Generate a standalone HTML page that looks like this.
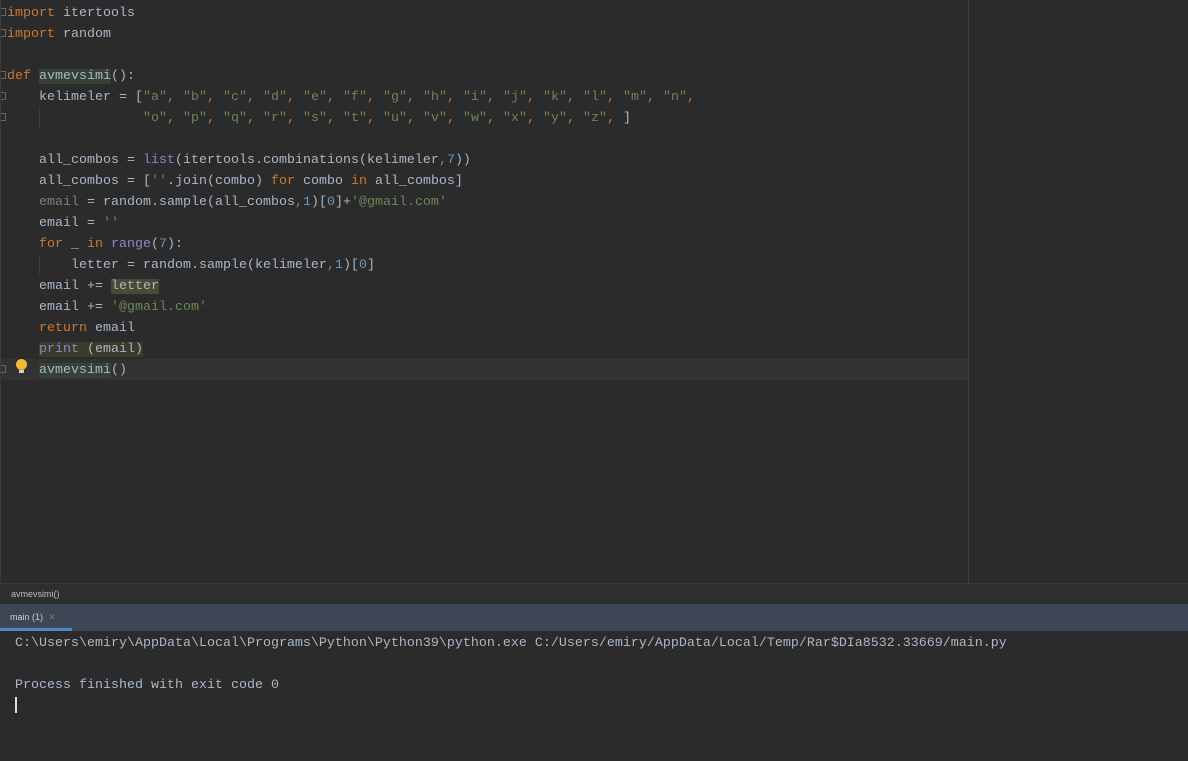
<!DOCTYPE html>
<html><head><meta charset="utf-8"><style>
body{margin:0;width:1188px;height:761px;background:#2b2b2b;overflow:hidden;position:relative;font-family:"Liberation Mono",monospace;}
.ed{position:absolute;left:0;top:0;width:1188px;height:583px;background:#2b2b2b;border-left:1px solid #3a3a3a;box-sizing:border-box}
.l{position:absolute;left:6px;height:21px;line-height:21px;font-size:13.33px;color:#a9b7c6;white-space:pre;margin-top:1px}
.k{color:#cc7832}.s{color:#6a8759}.n{color:#6897bb}.b{color:#8888c6}.g{color:#7a7e85}
.cur{position:absolute;left:0;top:359px;width:967px;height:21px;background:#323232}
.margin{position:absolute;left:967px;top:0;width:1px;height:583px;background:#3d3d3d}
.crumb{position:absolute;left:0;top:583px;width:1188px;height:21px;background:#2f2f2f;border-top:1px solid #383838;font-family:"Liberation Sans",sans-serif;font-size:9px;color:#bbb;line-height:21px;padding-left:11px;box-sizing:border-box}
.tabs{position:absolute;left:0;top:604px;width:1188px;height:27px;background:#3c4654}
.tab{position:absolute;left:0;top:0;width:72px;height:27px;border-bottom:3px solid #4a88c7;box-sizing:border-box;font-family:"Liberation Sans",sans-serif;font-size:9px;color:#ccc;line-height:27px;padding-left:10px}
.con{position:absolute;left:15px;font-size:13.33px;color:#a9b7c6;white-space:pre;line-height:21px;height:21px;margin-top:1px}
.hl{background:#4a4a35}
.hl2{background:#3b3b2b}
.dh{background:#344134}
.fold{position:absolute;left:0;width:5px;height:8px;border:1px solid #666;border-left:none;box-sizing:border-box}
</style></head><body>
<div class="ed">
<div class="cur"></div>
<div class="margin"></div>
<div style="position:absolute;left:38px;top:107px;width:1px;height:21px;background:#393939"></div>
<div style="position:absolute;left:38px;top:254px;width:1px;height:21px;background:#393939"></div>
<div class="fold" style="top:8px"></div><div class="fold" style="top:29px"></div><div class="fold" style="top:71px"></div><div class="fold" style="top:92px"></div><div class="fold" style="top:113px"></div><div class="fold" style="top:365px"></div>
<div style="position:absolute;left:15px;top:359px;width:11px;height:11px;border-radius:50%;background:#f2b935"></div>
<div style="position:absolute;left:18px;top:370px;width:5px;height:3px;background:#ccc"></div>
<div class="l" style="top:2px"><span class="k">import</span> itertools</div>
<div class="l" style="top:23px"><span class="k">import</span> random</div>
<div class="l" style="top:65px"><span class="k">def</span> <span class="dh">avmevsimi</span>():</div>
<div class="l" style="top:86px">    kelimeler = [<span class="s">"a"</span><span class="k">, </span><span class="s">"b"</span><span class="k">, </span><span class="s">"c"</span><span class="k">, </span><span class="s">"d"</span><span class="k">, </span><span class="s">"e"</span><span class="k">, </span><span class="s">"f"</span><span class="k">, </span><span class="s">"g"</span><span class="k">, </span><span class="s">"h"</span><span class="k">, </span><span class="s">"i"</span><span class="k">, </span><span class="s">"j"</span><span class="k">, </span><span class="s">"k"</span><span class="k">, </span><span class="s">"l"</span><span class="k">, </span><span class="s">"m"</span><span class="k">, </span><span class="s">"n"</span><span class="k">,</span></div>
<div class="l" style="top:107px">                 <span class="s">"o"</span><span class="k">, </span><span class="s">"p"</span><span class="k">, </span><span class="s">"q"</span><span class="k">, </span><span class="s">"r"</span><span class="k">, </span><span class="s">"s"</span><span class="k">, </span><span class="s">"t"</span><span class="k">, </span><span class="s">"u"</span><span class="k">, </span><span class="s">"v"</span><span class="k">, </span><span class="s">"w"</span><span class="k">, </span><span class="s">"x"</span><span class="k">, </span><span class="s">"y"</span><span class="k">, </span><span class="s">"z"</span><span class="k">, </span>]</div>
<div class="l" style="top:149px">    all_combos = <span class="b">list</span>(itertools.combinations(kelimeler<span class="k">,</span><span class="n">7</span>))</div>
<div class="l" style="top:170px">    all_combos = [<span class="s">''</span>.join(combo) <span class="k">for</span> combo <span class="k">in</span> all_combos]</div>
<div class="l" style="top:191px">    <span class="g">email</span> = random.sample(all_combos<span class="k">,</span><span class="n">1</span>)[<span class="n">0</span>]+<span class="s">'@gmail.com'</span></div>
<div class="l" style="top:212px">    email = <span class="s">''</span></div>
<div class="l" style="top:233px">    <span class="k">for</span> _ <span class="k">in</span> <span class="b">range</span>(<span class="n">7</span>):</div>
<div class="l" style="top:254px">        letter = random.sample(kelimeler<span class="k">,</span><span class="n">1</span>)[<span class="n">0</span>]</div>
<div class="l" style="top:275px">    email += <span class="hl">letter</span></div>
<div class="l" style="top:296px">    email += <span class="s">'@gmail.com'</span></div>
<div class="l" style="top:317px">    <span class="k">return</span> email</div>
<div class="l" style="top:338px">    <span class="hl2"><span class="b">print</span> (email)</span></div>
<div class="l" style="top:359px">    <span class="dh">avmevsimi</span>()</div>
</div>
<div class="crumb">avmevsimi()</div>
<div class="tabs"><div class="tab">main (1) <span style="color:#777;margin-left:3px">✕</span></div></div>
<div class="con" style="top:632px">C:\Users\emiry\AppData\Local\Programs\Python\Python39\python.exe C:/Users/emiry/AppData/Local/Temp/Rar$DIa8532.33669/main.py</div>
<div class="con" style="top:674px">Process finished with exit code 0</div>
<div style="position:absolute;left:15px;top:697px;width:2px;height:16px;background:#ddd"></div>
</body></html>
